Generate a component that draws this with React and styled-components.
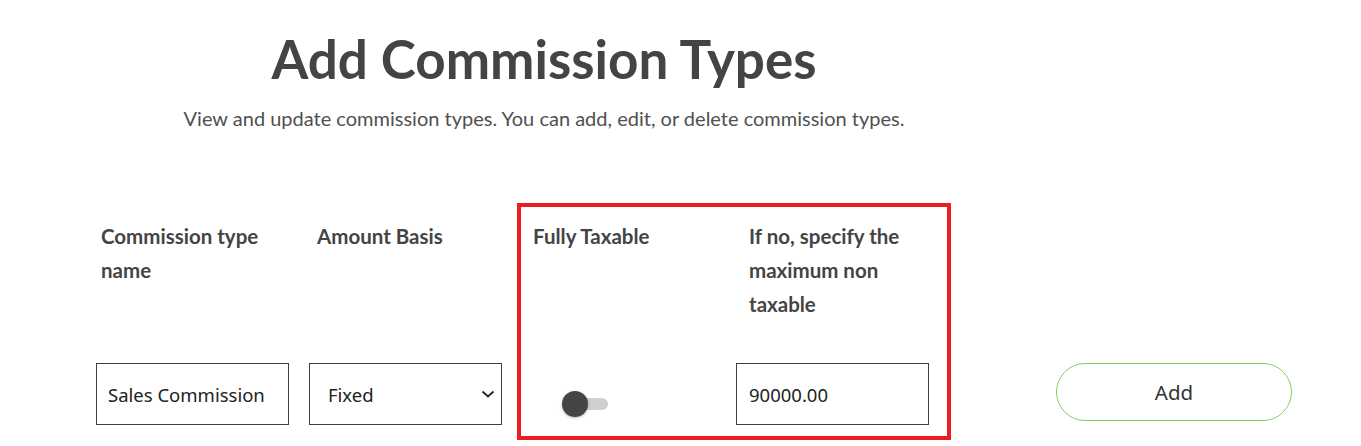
import React, { useState } from 'react';
import styled, { createGlobalStyle } from 'styled-components';

const Global = createGlobalStyle`
  body {
    margin: 0;
    background: #fff;
    font-family: Lato, "Open Sans", sans-serif;
    color: #444;
  }
`;

const Page = styled.div`
  padding-top: 24px;
`;

const Intro = styled.div`
  width: 1088px;
  text-align: center;
`;

const Title = styled.h1`
  margin: 0;
  font-size: 53px;
  font-weight: 700;
  line-height: 70px;
  color: #444;
`;

const Subtitle = styled.p`
  margin: 11px 0 0;
  font-size: 20px;
  line-height: 26px;
  color: #505050;
`;

const FormRow = styled.div`
  display: flex;
  align-items: flex-start;
  margin-top: 72px;
  padding-left: 89px;
`;

const Highlight = styled.div`
  display: flex;
  flex-shrink: 0;
  border: 4px solid #ec1c24;
  padding: 12px 19px 11px 12px;
`;

const Column = styled.div`
  display: flex;
  flex-direction: column;
  flex-shrink: 0;
  width: ${p => p.width}px;
  padding-top: ${p => (p.inside ? 0 : 16)}px;
  padding-left: ${p => p.indent || 0}px;
  margin-left: ${p => p.gap || 0}px;
`;

const Header = styled.div`
  height: 144px;
  font-size: 20.5px;
  font-weight: 700;
  line-height: 34px;
  color: #444;
  padding-right: 10px;
`;

const Control = styled.div`
  display: flex;
  margin-left: ${p => p.shift || 0}px;
`;

const TextInput = styled.input`
  box-sizing: border-box;
  width: 193px;
  height: 62px;
  border: 1px solid #3f3f3f;
  padding: 0 0 0 ${p => p.pad}px;
  font-family: "Noto Sans", "Open Sans", sans-serif;
  font-size: 18.5px;
  color: #222;
  outline: none;
`;

const SelectBox = styled.div`
  position: relative;
  box-sizing: border-box;
  width: 193px;
  height: 62px;
  border: 1px solid #3f3f3f;
  display: flex;
  align-items: center;
  padding-left: 18px;
  font-family: "Noto Sans", "Open Sans", sans-serif;
  font-size: 18.5px;
  color: #222;
`;

const Chevron = styled.svg`
  position: absolute;
  right: 6px;
  top: 25px;
`;

const Switch = styled.button`
  margin: 28px 0 0 29px;
  position: relative;
  width: 46px;
  height: 26px;
  border: 0;
  padding: 0;
  background: transparent;
  cursor: pointer;
`;

const Track = styled.span`
  position: absolute;
  left: 2px;
  right: 0;
  top: 7px;
  height: 12px;
  border-radius: 6px;
  background: #cfcfcf;
`;

const Knob = styled.span`
  position: absolute;
  left: ${p => (p.on ? 20 : 0)}px;
  top: 0;
  width: 26px;
  height: 26px;
  border-radius: 50%;
  background: #454545;
  box-shadow: 0 1px 3px rgba(0, 0, 0, 0.25);
`;

const AddButton = styled.button`
  width: 236px;
  height: 58px;
  border: 1px solid #8bd05c;
  border-radius: 29px;
  background: #fff;
  font-family: "Noto Sans", "Open Sans", sans-serif;
  font-size: 20.5px;
  color: #333;
  cursor: pointer;
`;

export default function App() {
  const [taxable, setTaxable] = useState(false);

  return (
    <Page>
      <Global />
      <Intro>
        <Title>Add Commission Types</Title>
        <Subtitle>View and update commission types. You can add, edit, or delete commission types.</Subtitle>
      </Intro>
      <FormRow>
        <Column width={216} indent={12}>
          <Header>Commission type name</Header>
          <Control shift={-5}>
            <TextInput pad={11} defaultValue="Sales Commission" />
          </Control>
        </Column>
        <Column width={200}>
          <Header>Amount Basis</Header>
          <Control shift={-8}>
            <SelectBox>
              Fixed
              <Chevron width="14" height="10" viewBox="0 0 14 10">
                <path d="M1.5 2.5 L7 7.5 L12.5 2.5" fill="none" stroke="#222" strokeWidth="1.8" />
              </Chevron>
            </SelectBox>
          </Control>
        </Column>
        <Highlight>
          <Column width={216} inside>
            <Header>Fully Taxable</Header>
            <Control>
              <Switch onClick={() => setTaxable(!taxable)} aria-label="Fully Taxable">
                <Track />
                <Knob on={taxable ? 1 : 0} />
              </Switch>
            </Control>
          </Column>
          <Column width={179} inside>
            <Header>If no, specify the maximum non taxable</Header>
            <Control shift={-13}>
              <TextInput pad={12} defaultValue="90000.00" />
            </Control>
          </Column>
        </Highlight>
        <Column width={240} gap={105}>
          <Header />
          <AddButton>Add</AddButton>
        </Column>
      </FormRow>
    </Page>
  );
}
